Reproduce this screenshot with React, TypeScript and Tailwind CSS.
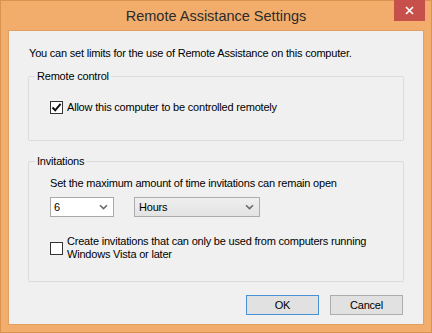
import { useState } from "react";

const font = "font-['Segoe_UI','Liberation_Sans',Arial,sans-serif]";

function Chevron() {
  return (
    <svg width="9" height="6" viewBox="0 0 9 6" className="shrink-0">
      <path d="M1 1.2 L4.5 4.6 L8 1.2" fill="none" stroke="#6b6b6b" strokeWidth="1.6" />
    </svg>
  );
}

function CheckBox({ checked }: { checked: boolean }) {
  return (
    <span className="w-[13px] h-[13px] shrink-0 border border-[#333] bg-white flex items-center justify-center">
      {checked && (
        <svg width="11" height="11" viewBox="0 0 11 11">
          <path d="M1.5 5.5 L4.2 8.3 L9.6 1.8" fill="none" stroke="#111" strokeWidth="2" />
        </svg>
      )}
    </span>
  );
}

export default function App() {
  const [allow, setAllow] = useState(true);
  const [vista, setVista] = useState(false);

  return (
    <div className={`w-[432px] h-[333px] bg-[#f2ad6c] border border-[#d9934f] flex flex-col text-[11px] leading-[14px] tracking-[-0.2px] text-black ${font}`}>
      {/* Title bar */}
      <div className="relative h-[29px] flex items-center justify-center shrink-0">
        <span className="text-[14.5px] tracking-normal text-[#2b2b2b] pt-[1px]">Remote Assistance Settings</span>
        <button className="absolute right-[6px] top-[-1px] w-[31px] h-[21px] bg-[#c7504b] flex items-center justify-center">
          <svg width="9" height="9" viewBox="0 0 9 9">
            <path d="M1 1 L8 8 M8 1 L1 8" stroke="#fff" strokeWidth="1.6" />
          </svg>
        </button>
      </div>

      {/* Client area */}
      <div className="mx-[7px] h-[295px] bg-[#f0f0f0] border border-[#e0a064] flex flex-col px-[19px] pt-[15px]">
        <p className="pl-[1px]">You can set limits for the use of Remote Assistance on this computer.</p>

        <fieldset className="mt-[9px] h-[72px] border border-[#dcdcdc] rounded-[2px]">
          <legend className="ml-[6px] px-[2px]">Remote control</legend>
          <label className="mt-[17px] ml-[21px] flex items-center gap-[4px] cursor-default" onClick={() => setAllow(!allow)}>
            <CheckBox checked={allow} />
            <span>Allow this computer to be controlled remotely</span>
          </label>
        </fieldset>

        <fieldset className="mt-[13px] h-[128px] border border-[#dcdcdc] rounded-[2px]">
          <legend className="ml-[6px] px-[2px]">Invitations</legend>
          <div className="ml-[21px] mt-[8px] flex flex-col">
            <p>Set the maximum amount of time invitations can remain open</p>
            <div className="mt-[7px] flex gap-[20px]">
              <div className="w-[64px] h-[20px] bg-white border border-[#a9a9a9] flex items-center justify-between pl-[3px] pr-[5px]">
                <span>6</span>
                <Chevron />
              </div>
              <div className="w-[126px] h-[20px] bg-gradient-to-b from-[#efefef] to-[#e3e3e3] border border-[#acacac] flex items-center justify-between pl-[4px] pr-[5px]">
                <span>Hours</span>
                <Chevron />
              </div>
            </div>
            <label className="mt-[18px] flex items-center gap-[4px] leading-[13px] cursor-default" onClick={() => setVista(!vista)}>
              <CheckBox checked={vista} />
              <span>
                Create invitations that can only be used from computers running
                <br />
                Windows Vista or later
              </span>
            </label>
          </div>
        </fieldset>

        <div className="mt-[13px] flex justify-end gap-[11px] pr-[1px]">
          <button className="w-[73px] h-[20px] bg-[#e1e1e1] border border-[#4a92d6]">OK</button>
          <button className="w-[73px] h-[20px] bg-[#e1e1e1] border border-[#adadad]">Cancel</button>
        </div>
      </div>
    </div>
  );
}
